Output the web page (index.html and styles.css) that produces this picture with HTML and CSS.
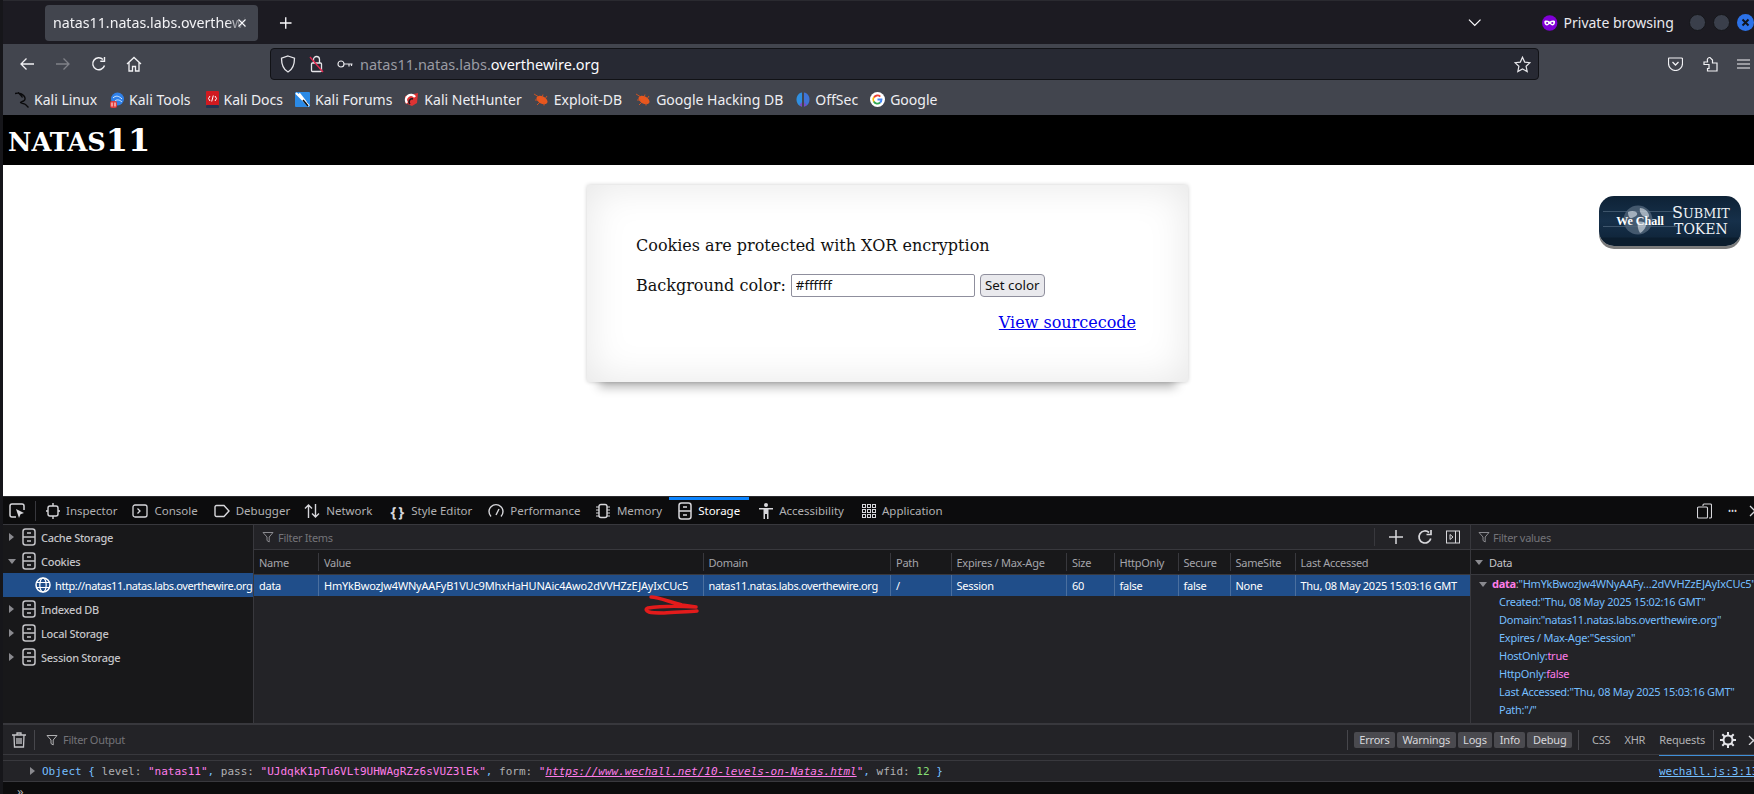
FILE: index.html
```html
<!DOCTYPE html>
<html lang="en">
<head>
<meta charset="utf-8">
<title>natas11</title>
<link rel="stylesheet" href="styles.css">
</head>
<body>
<svg class="defs" width="0" height="0" aria-hidden="true">
  <symbol id="drawer" viewBox="0 0 14 18"><rect x="1" y="1" width="12" height="16" rx="2.5" fill="none" stroke="currentColor" stroke-width="1.5"/><path d="M1 9h12M5 5h4M5 13h4" stroke="currentColor" stroke-width="1.5" fill="none"/></symbol>
  <symbol id="funnel" viewBox="0 0 12 12"><path d="M1 1.5h10L7.2 6v5L5 9.5V6z" fill="none" stroke="currentColor" stroke-width="1"/></symbol>
  <symbol id="roach" viewBox="0 0 15 13"><ellipse cx="8" cy="7" rx="6" ry="3.600" transform="rotate(28 8 7)" fill="#e8571f"/><path d="M0 1l5 3M1 7l4 0M3 12l3-3M9 1.500l-1 3M13 3l-2 3M10 12.500l0-3" stroke="#d9531f" stroke-width=".9"/></symbol>
</svg>
<div class="window">
  <header class="tabbar">
    <div class="tab"><span class="tab-title">natas11.natas.labs.overthewire.org</span><svg class="tab-x" width="10" height="10" viewBox="0 0 10 10"><path d="M1.5 1.5l7 7M8.5 1.5l-7 7" stroke="currentColor" stroke-width="1.1"/></svg></div>
    <svg class="newtab" width="14" height="14" viewBox="0 0 14 14"><path d="M7 1v12M1 7h12" stroke="currentColor" stroke-width="1.4"/></svg>
    <svg class="chevron" width="14" height="9" viewBox="0 0 14 9"><path d="M1 1.5l6 6 6-6" fill="none" stroke="currentColor" stroke-width="1.3"/></svg>
    <svg class="mask" width="16" height="16" viewBox="0 0 16 16"><circle cx="8" cy="8" r="8" fill="#8000d7"/><path d="M2.5 6c2-1 3.500-.5 5.500.5 2-1 3.500-1.500 5.500-.5 .3 2.500-.5 4.500-2.500 4.500-1.500 0-2-1.500-3-1.500s-1.500 1.500-3 1.500c-2 0-2.800-2-2.500-4.500z" fill="#fff"/><circle cx="5.300" cy="8" r="1.100" fill="#8000d7"/><circle cx="10.700" cy="8" r="1.100" fill="#8000d7"/></svg>
    <span class="private">Private browsing</span>
    <span class="winbtn"></span><span class="winbtn"></span>
    <span class="winbtn close"><svg width="17" height="17" viewBox="0 0 17 17"><path d="M5.500 5.500l6 6M11.500 5.500l-6 6" stroke="#10141c" stroke-width="2"/></svg></span>
  </header>

  <nav class="navbar">
    <svg class="nav-ic back" width="16" height="16" viewBox="0 0 16 16"><path d="M15 8H2M7.500 2.500L2 8l5.500 5.500" fill="none" stroke="currentColor" stroke-width="1.300"/></svg>
    <svg class="nav-ic fwd" width="16" height="16" viewBox="0 0 16 16"><path d="M1 8h13M8.500 2.500L14 8l-5.500 5.500" fill="none" stroke="currentColor" stroke-width="1.300"/></svg>
    <svg class="nav-ic reload" width="16" height="16" viewBox="0 0 16 16"><path d="M13.500 9.500A6 6 0 1 1 12 3.500M13.500 1v4.200H9.300" fill="none" stroke="currentColor" stroke-width="1.400"/></svg>
    <svg class="nav-ic home" width="16" height="16" viewBox="0 0 16 16"><path d="M1 8l7-6.500L15 8M3 6.500V15h3.500v-4.500h3V15H13V6.500" fill="none" stroke="currentColor" stroke-width="1.300"/></svg>
    <div class="urlbar">
      <svg class="shield" width="16" height="18" viewBox="0 0 16 18"><path d="M8 1l6.500 2.200c0 6-1 10.800-6.500 13.800C2.500 14 1.500 9.200 1.500 3.200z" fill="none" stroke="#e6e6ea" stroke-width="1.300"/></svg>
      <svg class="lock" width="15" height="18" viewBox="0 0 15 18"><path d="M4.500 8V4.500a3 3 0 0 1 6 0V8" fill="none" stroke="#e6e6ea" stroke-width="1.300"/><rect x="2.500" y="8" width="10" height="8.500" rx="1" fill="none" stroke="#e6e6ea" stroke-width="1.300"/><path d="M1 2l13 15" stroke="#e22850" stroke-width="1.400"/></svg>
      <svg class="key" width="16" height="10" viewBox="0 0 16 10"><circle cx="4" cy="5" r="3" fill="none" stroke="#e6e6ea" stroke-width="1.200"/><path d="M7 5h8.500M12 5v2.500M14.500 5v2" stroke="#e6e6ea" stroke-width="1.200" fill="none"/></svg>
      <span class="url"><span class="url-dim">natas11.natas.labs.</span>overthewire.org</span>
      <svg class="star" width="17" height="17" viewBox="0 0 17 17"><path d="M8.500 1.200l2.200 4.900 5.300.6-3.900 3.600 1.100 5.300-4.700-2.700-4.700 2.700 1.100-5.300L1 6.700l5.300-.6z" fill="none" stroke="#e6e6ea" stroke-width="1.200"/></svg>
    </div>
    <svg class="nav-ic pocket" width="15" height="14" viewBox="0 0 15 14"><path d="M1.500 1h12a1 1 0 0 1 1 1v4.500a7 7 0 0 1-14 0V2a1 1 0 0 1 .5-1z" fill="none" stroke="currentColor" stroke-width="1.200"/><path d="M4.500 5l3 3 3-3" fill="none" stroke="currentColor" stroke-width="1.300"/></svg>
    <svg class="nav-ic ext" width="15" height="16" viewBox="0 0 15 16"><path d="M1 6h3.500V5a2.500 2.500 0 0 1 2-3.500h.5l2.500 2.500V7H14v8H4.500v-2.500H6v-4H1z" fill="none" stroke="currentColor" stroke-width="1.200"/></svg>
    <svg class="nav-ic menu" width="13" height="12" viewBox="0 0 13 12"><path d="M0 2h13M0 6h13M0 10h13" stroke="currentColor" stroke-width="1.200"/></svg>
  </nav>

  <div class="bookmarks">
    <a class="bm b1"><svg width="14" height="16" viewBox="0 0 14 16"><path d="M0 1.500c4-1 7 0 9 2.500 1.500 2 1.500 4-.5 5-1.500.7-3 .7-3 1.500s3 .8 5 2l3 3M3 .5c1.500 1.500 3 2.500 4.500 5" fill="none" stroke="#0a0a0c" stroke-width="1.400"/></svg>Kali Linux</a>
    <a class="bm b2"><svg width="14" height="16" viewBox="0 0 14 16"><circle cx="7.500" cy="7" r="6.500" fill="#2f80e8"/><path d="M3 6c3-3 6-2 9 1M5 9c2-2 5-1 7 1" stroke="#d9ebff" fill="none"/><rect x="0" y="9" width="7" height="7" rx="2" fill="#e03a3a"/><path d="M2 10.500v4M5 10.500v4" stroke="#fff"/></svg>Kali Tools</a>
    <a class="bm b3"><svg width="13" height="17" viewBox="0 0 13 17"><rect x="0" y="0" width="13" height="15" rx="1" fill="#d01a20"/><rect x="0" y="14" width="13" height="3" rx="1" fill="#24324f"/><path d="M4 5L2.500 7.500 4 10M9 5l1.500 2.500L9 10M7.300 4.500L5.700 10.500" stroke="#fff" fill="none"/></svg>Kali Docs</a>
    <a class="bm b4"><svg width="15" height="15" viewBox="0 0 15 15"><rect width="15" height="15" rx="1" fill="#2b8ae6"/><path d="M1 1l13 13M4 1.500l7 9" stroke="#fff" stroke-width="2.200"/><path d="M8 8l5 6" stroke="#0c0c0d" stroke-width="1.500"/></svg>Kali Forums</a>
    <a class="bm b5"><svg width="15" height="15" viewBox="0 0 15 15"><path d="M1 4l13-3-1 10-5 3-7-3z" fill="#dd3333"/><path d="M3 11a5 5 0 0 1 8-6" fill="none" stroke="#fff" stroke-width="2.500"/><path d="M6 12a3 3 0 0 1 3-5" fill="none" stroke="#1c1b22" stroke-width="1.500"/></svg>Kali NetHunter</a>
    <a class="bm b6"><svg width="15" height="13"><use href="#roach"/></svg>Exploit-DB</a>
    <a class="bm b7"><svg width="15" height="13"><use href="#roach"/></svg>Google Hacking DB</a>
    <a class="bm b8"><svg width="14" height="15" viewBox="0 0 14 15"><path d="M6 .5C2.500 1 .5 4 .5 7.500S2.500 14 6 14.500z" fill="#2f8fe0"/><path d="M8 .5c3.500.5 5.500 3.500 5.500 7S11.500 14 8 14.500z" fill="#3f74d6"/><path d="M6 10v4.500C4.800 14.300 4 13.800 3.500 13zM8 10v4.500c1.200-.2 2-.7 2.500-1.500z" fill="#7b4bc4"/></svg>OffSec</a>
    <a class="bm b9"><svg width="15" height="15" viewBox="0 0 15 15"><circle cx="7.500" cy="7.500" r="7.500" fill="#fff"/><path d="M4 5.500A4 4 0 0 1 10.300 4.600" fill="none" stroke="#ea4335" stroke-width="1.800"/><path d="M3.800 5.300a4 4 0 0 0 0 4.400" fill="none" stroke="#fbbc05" stroke-width="1.800"/><path d="M3.800 9.500a4 4 0 0 0 6.300 1" fill="none" stroke="#34a853" stroke-width="1.800"/><path d="M7.500 7.500h4c0 1.500-.5 2.300-1.400 3" fill="none" stroke="#4285f4" stroke-width="1.800"/></svg>Google</a>
  </div>

  <main class="page">
    <h1 class="site-title"><span class="sc">natas</span>11</h1>
    <section class="card">
      <p class="line">Cookies are protected with XOR encryption</p>
      <form class="colorform">
        <label class="colorlabel" for="bg">Background color:</label>
        <input class="colorinput" id="bg" value="#ffffff">
        <button class="colorbtn" type="button">Set color</button>
      </form>
      <div class="sourcelink"><a href="#">View sourcecode</a></div>
    </section>
    <a class="wechall">
      <span class="wc-logo">
        <svg class="wc-globe" width="30" height="30" viewBox="0 0 30 30"><circle cx="15" cy="15" r="14.500" fill="#51657a"/><path d="M5 7c4-2 8-1 9 1s-2 4-5 5-4-3-4-6zM17 3c4 0 8 3 9 7s-4 2-6 1-4-6-3-8zM15 17c3-1 7 0 8 2s-3 8-6 9c-2-3-3-8-2-11z" fill="#c6d0da"/></svg>
        <span class="wc-name">We Chall</span>
      </span>
      <span class="wc-text"><span class="wc-submit">Submit</span><span class="wc-token">Token</span></span>
    </a>
  </main>

  <section class="devtools">
    <div class="dt-toolbar">
      <span class="dt-pick"><svg width="16" height="16" viewBox="0 0 16 16"><path d="M7 14H3a2 2 0 0 1-2-2V3a2 2 0 0 1 2-2h10a2 2 0 0 1 2 2v4" fill="none" stroke="currentColor" stroke-width="1.500"/><path d="M7 6l8 4-3.500 1.200L10 15z" fill="currentColor"/></svg></span>
      <span class="dt-tab t-ins"><svg width="14" height="16" viewBox="0 0 14 16"><rect x="2" y="3" width="10" height="10" rx="2" fill="none" stroke="currentColor" stroke-width="1.400"/><path d="M7 0v3M7 13v3M0 8h2M12 8h2" stroke="currentColor" stroke-width="1.400"/></svg>Inspector</span>
      <span class="dt-tab t-con"><svg width="16" height="14" viewBox="0 0 16 14"><rect x="1" y="1" width="14" height="12" rx="2" fill="none" stroke="currentColor" stroke-width="1.300"/><path d="M5.500 4.500L8 7l-2.500 2.500" fill="none" stroke="currentColor" stroke-width="1.300"/></svg>Console</span>
      <span class="dt-tab t-dbg"><svg width="16" height="14" viewBox="0 0 16 14"><path d="M2.500 1.500h7.500L15 7l-5 5.500H2.500a1.500 1.500 0 0 1-1.500-1.500V3a1.500 1.500 0 0 1 1.500-1.500z" fill="none" stroke="currentColor" stroke-width="1.400"/></svg>Debugger</span>
      <span class="dt-tab t-net"><svg width="16" height="16" viewBox="0 0 16 16"><path d="M4.500 15V2M1 5.500L4.500 2 8 5.500M11.500 1v13M8 10.500l3.500 3.500 3.500-3.500" fill="none" stroke="currentColor" stroke-width="1.400"/></svg>Network</span>
      <span class="dt-tab t-sty"><span class="brace">{ }</span>Style Editor</span>
      <span class="dt-tab t-prf"><svg width="16" height="15" viewBox="0 0 16 15"><path d="M3 13.500a7 7 0 1 1 10 0" fill="none" stroke="currentColor" stroke-width="1.400"/><path d="M8 12l3-6" stroke="currentColor" stroke-width="1.400"/></svg>Performance</span>
      <span class="dt-tab t-mem"><svg width="16" height="16" viewBox="0 0 16 16"><rect x="4" y="1.500" width="8" height="13" rx="2" fill="none" stroke="currentColor" stroke-width="1.400"/><path d="M1 4h3M1 7h3M1 10h3M1 13h3M12 4h3M12 7h3M12 10h3M12 13h3" stroke="currentColor"/></svg>Memory</span>
      <span class="dt-tab t-sto active"><svg width="14" height="18"><use href="#drawer"/></svg>Storage</span>
      <span class="dt-tab t-acc"><svg width="14" height="16" viewBox="0 0 14 16"><circle cx="7" cy="2" r="2" fill="currentColor"/><path d="M0 5h14v1.500H9.500V16H8v-5H6v5H4.500V6.500H0z" fill="currentColor"/></svg>Accessibility</span>
      <span class="dt-tab t-app"><svg width="14" height="14" viewBox="0 0 14 14"><g fill="none" stroke="currentColor"><rect x=".5" y=".5" width="3" height="3"/><rect x="5.500" y=".5" width="3" height="3"/><rect x="10.500" y=".5" width="3" height="3"/><rect x=".5" y="5.500" width="3" height="3"/><rect x="5.500" y="5.500" width="3" height="3"/><rect x="10.500" y="5.500" width="3" height="3"/><rect x=".5" y="10.500" width="3" height="3"/><rect x="5.500" y="10.500" width="3" height="3"/><rect x="10.500" y="10.500" width="3" height="3"/></g></svg>Application</span>
      <span class="dt-right">
        <svg width="15" height="16" viewBox="0 0 15 16"><path d="M6 3V2a1 1 0 0 1 1-1h6.500a1 1 0 0 1 1 1v12a1 1 0 0 1-1 1H12M1.500 4h8a1 1 0 0 1 1 1v9a1 1 0 0 1-1 1h-8a1 1 0 0 1-1-1V5a1 1 0 0 1 1-1z" fill="none" stroke="currentColor" stroke-width="1.100"/></svg>
        <span class="dots">•••</span>
        <svg width="12" height="12" viewBox="0 0 12 12"><path d="M1 1l10 10M11 1L1 11" stroke="currentColor" stroke-width="1.300"/></svg>
      </span>
    </div>

    <div class="dt-main">
      <aside class="tree">
        <div class="tree-row"><i class="tri"></i><svg width="14" height="18"><use href="#drawer"/></svg>Cache Storage</div>
        <div class="tree-row"><i class="tri open"></i><svg width="14" height="18"><use href="#drawer"/></svg>Cookies</div>
        <div class="tree-row selected"><svg class="globe" width="16" height="16" viewBox="0 0 16 16"><circle cx="8" cy="8" r="7" fill="none" stroke="#fff" stroke-width="1.500"/><ellipse cx="8" cy="8" rx="3.200" ry="7" fill="none" stroke="#fff" stroke-width="1.200"/><path d="M1 5.500h14M1 10.500h14" stroke="#fff" stroke-width="1.200"/></svg>http://natas11.natas.labs.overthewire.org</div>
        <div class="tree-row"><i class="tri"></i><svg width="14" height="18"><use href="#drawer"/></svg>Indexed DB</div>
        <div class="tree-row"><i class="tri"></i><svg width="14" height="18"><use href="#drawer"/></svg>Local Storage</div>
        <div class="tree-row"><i class="tri"></i><svg width="14" height="18"><use href="#drawer"/></svg>Session Storage</div>
      </aside>

      <div class="tablepane">
        <div class="filterbar">
          <svg width="12" height="12"><use href="#funnel"/></svg><span class="placeholder">Filter Items</span>
          <span class="filter-actions">
            <svg width="16" height="16" viewBox="0 0 16 16"><path d="M8 1v14M1 8h14" stroke="currentColor" stroke-width="1.500"/></svg>
            <svg width="16" height="16" viewBox="0 0 16 16"><path d="M13.800 9.500A6 6 0 1 1 12 3.500M14 1v4.500H9.500" fill="none" stroke="currentColor" stroke-width="1.700"/></svg>
            <svg width="14" height="14" viewBox="0 0 14 14"><rect x=".5" y="1" width="13" height="12" fill="none" stroke="currentColor"/><path d="M9.500 1v12" stroke="currentColor"/><path d="M4 4.500L7 7l-3 2.500z" fill="none" stroke="currentColor"/></svg>
          </span>
        </div>
        <div class="cookie-table">
          <div class="th">Name</div><div class="th">Value</div><div class="th">Domain</div><div class="th">Path</div><div class="th">Expires / Max-Age</div><div class="th">Size</div><div class="th">HttpOnly</div><div class="th">Secure</div><div class="th">SameSite</div><div class="th">Last Accessed</div>
          <div class="td">data</div><div class="td td-value">HmYkBwozJw4WNyAAFyB1VUc9MhxHaHUNAic4Awo2dVVHZzEJAyIxCUc5</div><div class="td td-domain">natas11.natas.labs.overthewire.org</div><div class="td">/</div><div class="td">Session</div><div class="td">60</div><div class="td">false</div><div class="td">false</div><div class="td">None</div><div class="td">Thu, 08 May 2025 15:03:16 GMT</div>
        </div>
      </div>

      <aside class="details">
        <div class="filterbar"><svg width="12" height="12"><use href="#funnel"/></svg><span class="placeholder">Filter values</span></div>
        <div class="details-head"><i class="tri open"></i>Data</div>
        <div class="kv kv-top"><i class="tri open"></i><b class="k-pink">data</b><span class="pun">:</span><span>"HmYkBwozJw4WNyAAFy…2dVVHZzEJAyIxCUc5"</span></div>
        <div class="kv">Created:"Thu, 08 May 2025 15:02:16 GMT"</div>
        <div class="kv">Domain:"natas11.natas.labs.overthewire.org"</div>
        <div class="kv">Expires / Max-Age:"Session"</div>
        <div class="kv">HostOnly:<span class="k-pink">true</span></div>
        <div class="kv">HttpOnly:<span class="k-pink">false</span></div>
        <div class="kv">Last Accessed:"Thu, 08 May 2025 15:03:16 GMT"</div>
        <div class="kv">Path:"/"</div>
      </aside>
    </div>

    <div class="console-bar">
      <svg class="trash" width="14" height="16" viewBox="0 0 14 16"><path d="M0 3h14M5 3V1h4v2M2 3l.5 12h9L12 3M5 6v6M7 6v6M9 6v6" fill="none" stroke="currentColor" stroke-width="1.300"/></svg>
      <span class="cb-sep"></span>
      <svg width="12" height="12"><use href="#funnel"/></svg><span class="placeholder">Filter Output</span>
      <span class="levels">
        <span class="cb-sep"></span>
        <span class="lvl">Errors</span><span class="lvl">Warnings</span><span class="lvl">Logs</span><span class="lvl">Info</span><span class="lvl">Debug</span>
        <span class="cb-sep"></span>
        <span class="net">CSS</span><span class="net">XHR</span><span class="net">Requests</span>
        <span class="cb-sep"></span>
        <svg class="gear" width="16" height="16" viewBox="0 0 16 16"><circle cx="8" cy="8" r="4.500" fill="none" stroke="currentColor" stroke-width="2"/><path d="M8 0v3M8 13v3M0 8h3M13 8h3M2.300 2.300l2.200 2.200M11.500 11.500l2.200 2.200M13.700 2.300l-2.200 2.200M4.500 11.500l-2.200 2.200" stroke="currentColor" stroke-width="2"/></svg>
        <svg class="bar-x" width="10" height="10" viewBox="0 0 10 10"><path d="M1 1l9 9M10 1l-9 9" stroke="currentColor" stroke-width="1.300"/></svg>
      </span>
    </div>
    <div class="console-gap"></div>
    <div class="console-msg">
      <i class="tri"></i>
      <code class="obj"><span class="c-blue">Object { </span><span class="c-key">level:</span> <span class="c-pink">"natas11"</span><span class="c-blue">,</span> <span class="c-key">pass:</span> <span class="c-pink">"UJdqkK1pTu6VLt9UHWAgRZz6sVUZ3lEk"</span><span class="c-blue">,</span> <span class="c-key">form:</span> <span class="c-pink">"<a class="c-url">https://www.wechall.net/10-levels-on-Natas.html</a>"</span><span class="c-blue">,</span> <span class="c-key">wfid:</span> <span class="c-green">12</span> <span class="c-blue">}</span></code>
      <a class="src">wechall.js:3:13</a>
    </div>
    <div class="console-input">»</div>
  </section>

  <svg class="scribble" width="60" height="22" viewBox="0 0 60 22"><path d="M11 3C18 3 30 8 42 11L56 13C40 12 20 12 8 14C5 15 6 17 9 18C12 19 18 19 24 19C35 18 48 18 57 17" fill="none" stroke="#e31b1b" stroke-width="3.500" stroke-linecap="round" stroke-linejoin="round"/></svg>
</div>
</body>
</html>
```

FILE: styles.css
```css
* { box-sizing: border-box; }
html, body { margin: 0; height: 100%; overflow: hidden; }
body { background: #16161a; font-family: "Noto Sans", sans-serif; }
.defs { position: absolute; }
.window { position: relative; display: flex; flex-direction: column; height: 794px; margin-left: 3px; overflow: hidden; }

/* tab strip */
.tabbar { height: 44px; flex: none; background: #1c1b22; display: flex; align-items: center; color: #fbfbfe; border-top: 1px solid #2a2a30; }
.tab { margin-left: 42px; width: 221px; height: 36px; background: #42454e; border-radius: 4px; display: flex; align-items: center; padding-left: 8px; position: relative; }
.tab-title { width: 193px; white-space: nowrap; overflow: hidden; font-size: 14.2px; color: #f3f3f6; -webkit-mask-image: linear-gradient(90deg, #000 90%, transparent); mask-image: linear-gradient(90deg, #000 90%, transparent); }
.tab-x { position: absolute; right: 11px; top: 13px; }
.newtab { margin-left: 21px; }
.chevron { margin-left: 1175px; }
.mask { margin-left: 61px; }
.private { margin-left: 6px; font-size: 14px; color: #e9e9ee; width: 123px; white-space: nowrap; }
.winbtn { width: 17px; height: 17px; border-radius: 50%; background: #3a3f4b; margin-left: 7px; flex: none; border: 1px solid #15161a; }
.winbtn.close { background: #2c72e8; border: 0; }
.winbtn svg { display: block; }

/* nav */
.navbar { height: 40px; flex: none; background: #42454e; display: flex; align-items: center; color: #f1f1f4; }
.nav-ic { flex: none; }
.back { margin-left: 16px; }
.fwd { margin-left: 20px; opacity: .35; }
.reload { margin-left: 20px; }
.home { margin-left: 19px; }
.urlbar { width: 1269px; height: 32px; margin-left: 128px; background: #272933; border: 1px solid #111216; border-radius: 4px; display: flex; align-items: center; flex: none; }
.shield { margin-left: 9px; }
.lock { margin-left: 13px; }
.key { margin-left: 13px; }
.url { margin-left: 7px; font-size: 14.5px; color: #fbfbfe; white-space: nowrap; }
.url-dim { color: #9a9ba3; }
.star { margin-left: auto; margin-right: 7px; }
.pocket { margin-left: 129px; }
.ext { margin-left: 20px; }
.menu { margin-left: 19px; }

/* bookmarks */
.bookmarks { height: 31px; flex: none; background: #42454e; display: flex; align-items: center; color: #eeeef2; font-size: 14px; padding-left: 12px; }
.bm { display: flex; align-items: center; gap: 5px; white-space: nowrap; flex: none; }
.b2 { margin-left: 13px; }
.b3 { margin-left: 15px; }
.b4 { margin-left: 12px; }
.b5 { margin-left: 12px; }
.b6 { margin-left: 12px; }
.b7 { margin-left: 14px; }
.b8 { margin-left: 13px; }
.b9 { margin-left: 12px; }

/* page */
.page { height: 382px; flex: none; background: #fff; position: relative; font-family: "DejaVu Serif", serif; color: #111; border-bottom: 1px solid #2a2a2e; }
.site-title { margin: 0; height: 50px; background: #000; color: #fff; font-size: 32px; line-height: 50px; font-weight: bold; padding-left: 5px; }
.sc { font-size: 25.6px; text-transform: uppercase; }
.card { width: 601px; height: 197px; margin: 20px 0 0 584px; padding: 49px 52px 0 49px; box-shadow: inset 0 0 40px rgba(0,0,0,.1), 0 0 4px rgba(0,0,0,.2), 0 17px 10px -12px rgba(0,0,0,.3); background: #fff; border-radius: 2px; }
.line { margin: 0; font-size: 16px; line-height: 24px; }
.colorform { display: flex; align-items: center; height: 24px; margin-top: 15px; font-size: 16px; }
.colorlabel { white-space: nowrap; }
.colorinput { width: 184px; height: 23px; margin-left: 5px; border: 1px solid #8f8f9d; border-radius: 2px; padding: 0 4px; font: 13.33px "Noto Sans", sans-serif; color: #111; background: #fff; }
.colorbtn { width: 65px; height: 23px; margin-left: 5px; border: 1px solid #8f8f9d; border-radius: 4px; background: #e9e9ed; font: 13.33px "Noto Sans", sans-serif; color: #111; padding: 0; }
.sourcelink { text-align: right; margin-top: 14px; font-size: 16px; line-height: 24px; }
.sourcelink a { color: #00e; }
.wechall { position: absolute; left: 1596px; top: 81px; width: 142px; height: 50px; border-radius: 15px; background: linear-gradient(#0e2236, #16304a 50%, #10263c 82%, #0b1d2e 84%); box-shadow: 0 3px 0 #7c7c7c; display: flex; align-items: center; color: #eef2f6; font-family: "DejaVu Serif", serif; }
.wc-logo { position: relative; width: 58px; margin-left: 12px; height: 32px; display: flex; align-items: center; justify-content: center; }
.wc-logo::before { content: ""; position: absolute; left: -8px; right: -8px; top: 6px; height: 14px; border-top: 1px solid rgba(190,210,230,.25); border-bottom: 1px solid rgba(190,210,230,.25); }
.wc-globe { position: absolute; left: 12px; top: 0; opacity: .8; }
.wc-name { position: relative; font: bold 12px "Liberation Serif", serif; color: #fff; white-space: nowrap; }
.wc-text { display: flex; flex-direction: column; align-items: center; margin-left: 3px; line-height: 14.5px; text-transform: uppercase; position: relative; }
.wc-submit { font-size: 12.8px; }
.wc-submit::first-letter { font-size: 16px; }
.wc-token { font-size: 14px; }

/* devtools */
.devtools { flex: 1; display: flex; flex-direction: column; min-height: 0; background: #232327; color: #b1b1b3; font-size: 11.5px; }
.dt-toolbar { height: 28px; flex: none; background: #0c0c0d; border-bottom: 1px solid #38383d; display: flex; align-items: center; position: relative; }
.dt-pick { width: 33px; padding-left: 6px; height: 20px; display: flex; align-items: center; border-right: 1px solid #38383d; color: #d7d7db; flex: none; }
.dt-tab { display: flex; align-items: center; gap: 6px; white-space: nowrap; height: 27px; flex: none; }
.t-ins { margin-left: 10px; }
.t-con { margin-left: 15px; }
.t-dbg { margin-left: 16px; }
.t-net { margin-left: 14px; }
.t-sty { margin-left: 18px; gap: 8px; }
.t-prf { margin-left: 16px; }
.t-mem { margin-left: 14.5px; }
.t-sto { margin-left: 7px; padding: 0 9px 0 9px; color: #fff; }
.t-acc { margin-left: 10px; }
.t-app { margin-left: 18px; }
.dt-tab svg { color: #d7d7db; flex: none; }
.active { box-shadow: inset 0 3px 0 #0a84ff; }
.brace { font-size: 15px; color: #d7d7db; font-weight: bold; letter-spacing: -1px; }
.dt-right { margin-left: auto; display: flex; align-items: center; gap: 12px; color: #d7d7db; margin-right: -7px; }
.dots { font-size: 8px; margin-left: 4px; }

.dt-main { height: 200px; flex: none; display: grid; grid-template-columns: 251px 1216px 1fr; border-bottom: 2px solid #38383d; font-size: 11px; letter-spacing: -.27px; }
.tree { background: #18181a; border-right: 1px solid #38383d; color: #c4c4c8; min-width: 0; overflow: hidden; }
.tree-row { height: 24px; display: flex; align-items: center; white-space: nowrap; font-weight: 500; }
.tree-row svg { margin-right: 5px; flex: none; }
.tri { width: 0; height: 0; border-left: 5px solid #8a8a8f; border-top: 4px solid transparent; border-bottom: 4px solid transparent; flex: none; margin: 0 8px 0 6px; }
.tri.open { border-left: 4px solid transparent; border-right: 4px solid transparent; border-top: 5px solid #8a8a8f; border-bottom: 0; margin: 0 6px 0 5px; }
.selected { background: #204e8a; color: #fff; font-weight: 400; padding-left: 32px; letter-spacing: -.41px; }
.tree-row .globe { margin-right: 4px; }

.tablepane { min-width: 0; background: #232327; }
.filterbar { height: 25px; display: flex; align-items: center; padding-left: 8px; border-bottom: 1px solid #38383d; color: #8a8a8f; gap: 4px; }
.placeholder { color: #737378; font-size: 11px; letter-spacing: -.3px; }
.filter-actions { margin-left: auto; display: flex; align-items: center; gap: 13px; padding-left: 13px; border-left: 1px solid #38383d; height: 18px; color: #d7d7db; margin-right: 10px; }
.cookie-table { display: grid; grid-template-columns: 65px 384.5px 187.5px 60.5px 115.5px 47.5px 64px 52px 65px 1fr; }
.th { height: 25px; background: linear-gradient(#38383d, #38383d) right center / 1px 18px no-repeat, #18181a; display: flex; align-items: center; padding-left: 5px; color: #a5a5aa; white-space: nowrap; overflow: hidden; border-bottom: 1px solid #38383d; }
.th:nth-child(10) { background: #18181a; }
.td { height: 21px; background: #204e8a; color: #fff; display: flex; align-items: center; padding-left: 5px; border-right: 1px solid #4a6f9f; white-space: nowrap; overflow: hidden; }
.td:nth-child(20) { border-right: 0; }
.td-value { letter-spacing: -.19px; }
.td-domain { letter-spacing: -.36px; }

.details { min-width: 0; border-left: 1px solid #38383d; overflow: hidden; background: #232327; }
.details .filterbar { padding-left: 7px; gap: 3px; }
.details-head { height: 25px; background: #18181a; display: flex; align-items: center; color: #c4c4c8; border-bottom: 1px solid #38383d; }
.details-head .tri { margin: 0 6px 0 4px; }
.kv { height: 18px; line-height: 18px; padding-left: 28px; color: #75bfff; white-space: nowrap; }
.kv-top { display: flex; align-items: center; padding-left: 8px; color: #75bfff; }
.kv-top .tri { margin: 0 5px 0 0; }
.k-pink { color: #ff7de9; }
.pun { color: #b1b1b3; }

.console-bar { height: 30px; flex: none; display: flex; align-items: center; padding-left: 9px; gap: 5px; border-bottom: 1px solid #38383d; }
.trash { color: #c4c4c8; margin-right: 3px; }
.cb-sep { width: 1px; height: 20px; background: #47474c; flex: none; margin-right: 6px; }
.levels { margin-left: auto; display: flex; align-items: center; gap: 2px; font-size: 11px; letter-spacing: -.2px; }
.lvl { height: 16px; line-height: 16px; padding: 0 5.5px; background: #4a4a4f; color: #d7d7db; border-radius: 2px; }
.net { margin-left: 12px; color: #b1b1b3; }
.levels .cb-sep { margin: 0 4px; }
.levels .lvl + .cb-sep { margin-right: -1px; }
.levels .net + .cb-sep { margin-left: 6px; }
.gear { margin-right: 10px; color: #e4e4e8; }
.bar-x { margin-right: -4px; color: #d7d7db; }
.console-gap { height: 6px; flex: none; border-bottom: 1px solid #38383d; background: linear-gradient(#3f8fd8, #3f8fd8) 1656px 0 / 100% 1px no-repeat; }
.console-msg { height: 21px; flex: none; display: flex; align-items: center; border-bottom: 1px solid #38383d; padding-left: 19px; }
.console-msg .tri { margin: 0 7px 0 8px; }
.obj { font: 11px "DejaVu Sans Mono", monospace; white-space: pre; color: #b1b1b3; }
.c-blue { color: #75bfff; }
.c-key { color: #b1b1b3; }
.c-pink { color: #ff7de9; }
.c-url { text-decoration: underline; font-style: italic; }
.c-green { color: #86de74; }
.src { position: absolute; left: 1656px; font: 11px "DejaVu Sans Mono", monospace; color: #75bfff; text-decoration: underline; white-space: nowrap; }
.console-input { flex: 1; background: #0c0c0d; color: #b1b1b3; padding: 2px 0 0 14px; font-size: 13px; line-height: 14px; overflow: hidden; }

.scribble { position: absolute; left: 637px; top: 594px; }
```
